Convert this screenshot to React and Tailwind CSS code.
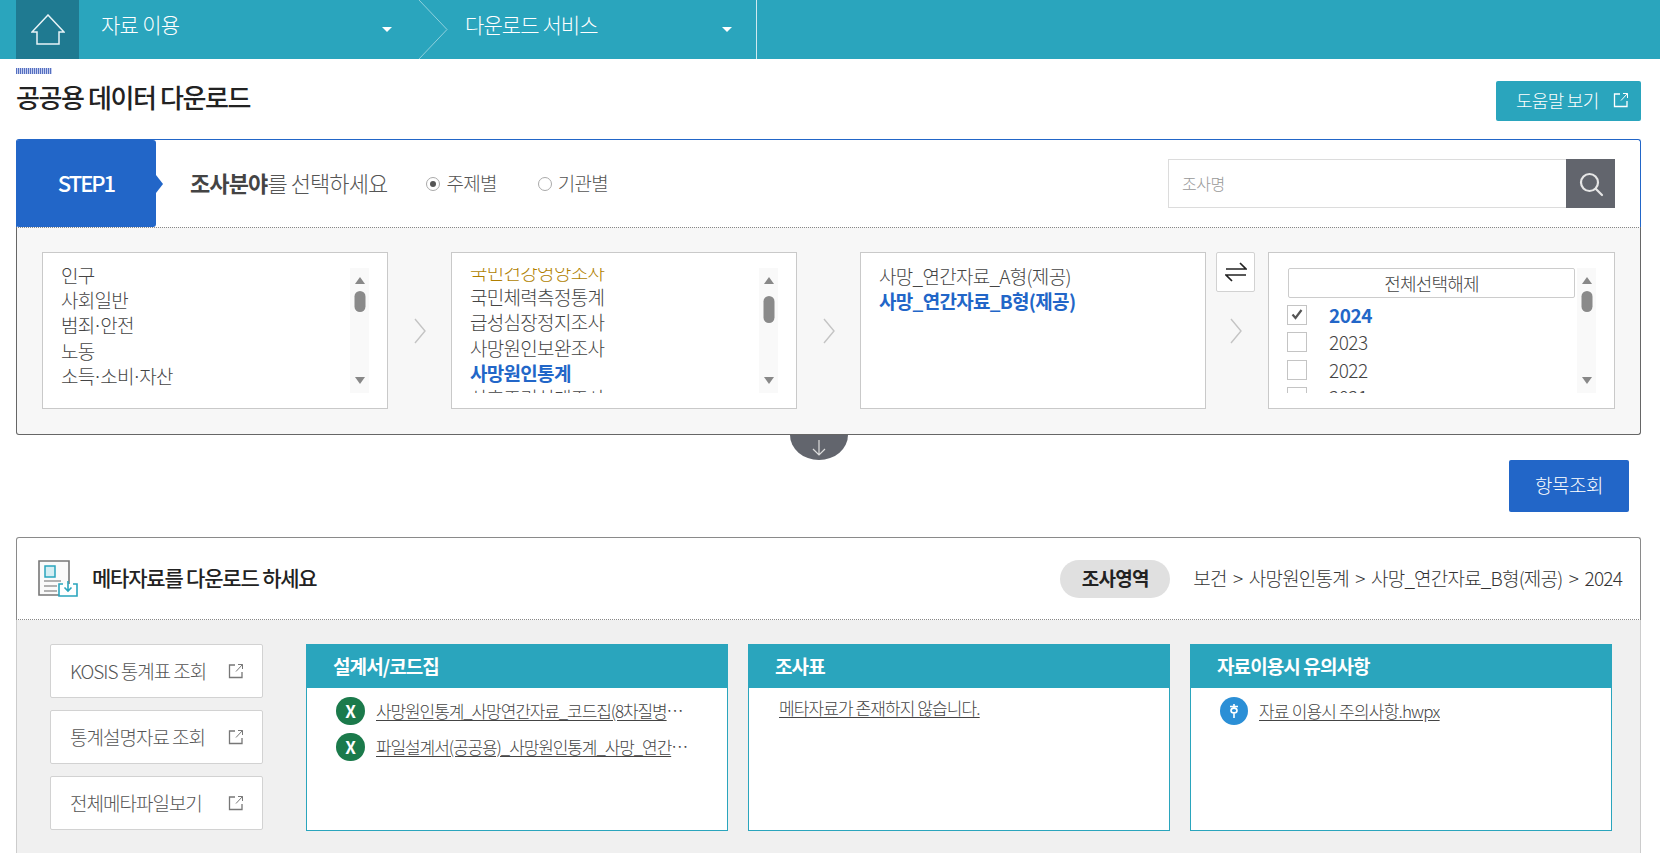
import { useState } from "react";

const BLUE = "text-[#2266c8]";

const ExternalIcon = ({ color = "#777" }) => (
  <svg width="16" height="16" viewBox="0 0 16 16" fill="none" stroke={color} strokeWidth="1.3" className="shrink-0">
    <path d="M7 2H1.5v12.5H14V9" />
    <path d="M8 8.5 14.5 1.5M10 1.5h4.5V6" strokeWidth="1" />
  </svg>
);

const Caret = () => <span className="w-0 h-0 mt-[9px] border-x-[5px] border-x-transparent border-t-[5px] border-t-white" />;

const Chevron = () => (
  <svg width="14" height="26" viewBox="0 0 14 26" fill="none" stroke="#c4c4c4" strokeWidth="1.4" className="shrink-0">
    <path d="M2 1l10 12L2 25" />
  </svg>
);

const Dot = () => <span className="-mx-[2px]">·</span>;

const Scrollbar = ({ thumbTop, thumbHeight }) => (
  <div className="relative w-[19px] h-full bg-[#f9f9f9] shrink-0 flex flex-col items-center justify-between py-[9px]">
    <span className="w-0 h-0 border-x-[5px] border-x-transparent border-b-[7px] border-b-[#888]" />
    <span
      className="absolute left-1/2 -translate-x-1/2 w-[11px] rounded-full bg-[#8a8a8a]"
      style={{ top: thumbTop, height: thumbHeight }}
    />
    <span className="w-0 h-0 border-x-[5px] border-x-transparent border-t-[7px] border-t-[#888]" />
  </div>
);

const ListBox = ({ children, scroll, className = "" }) => (
  <div className={`w-[346px] h-[157px] shrink-0 bg-white border border-[#c9c9c9] pl-[18px] pr-[18px] pt-[15px] ${className}`}>
    <div className="flex h-[125px]">
      <div className="flex-1 min-w-0 overflow-hidden">{children}</div>
      {scroll && <Scrollbar {...scroll} />}
    </div>
  </div>
);

const Row = ({ children, tone = "text-[#444]" }) => (
  <div className={`h-[25.2px] leading-[25px] text-[19px] tracking-[-0.7px] whitespace-nowrap ${tone}`}>{children}</div>
);

const Check = ({ checked }) => (
  <span className="w-[20px] h-[20px] border border-[#c4c4c4] bg-white flex items-center justify-center shrink-0">
    {checked && (
      <svg width="12" height="11" viewBox="0 0 12 11" fill="none" stroke="#555" strokeWidth="2.2">
        <path d="M1.5 5.5l3 3.5 6-8" />
      </svg>
    )}
  </span>
);

const YearRow = ({ year, checked }) => (
  <div className="flex items-center gap-[22px] h-[27.5px]">
    <Check checked={checked} />
    <span className={`text-[19px] tracking-[-0.5px] ${checked ? `font-bold ${BLUE}` : "text-[#444]"}`}>{year}</span>
  </div>
);

const Radio = ({ label, checked }) => (
  <label className="flex items-center gap-[6px] text-[19px] tracking-[-0.7px] text-[#555]">
    <span className="w-[14px] h-[14px] mt-[2px] rounded-full border border-[#aaa] bg-white flex items-center justify-center">
      {checked && <span className="w-[6px] h-[6px] rounded-full bg-[#555]" />}
    </span>
    {label}
  </label>
);

const SideLink = ({ label }) => (
  <a className="h-[54px] bg-white border border-[#d2d2d2] rounded-[2px] flex items-center justify-between pl-[19px] pr-[18px] text-[19px] tracking-[-1px] text-[#555]">
    {label}
    <ExternalIcon />
  </a>
);

const FileIcon = ({ type }) =>
  type === "xls" ? (
    <span className="w-[29px] h-[28px] rounded-full bg-[#1b7a4b] text-white text-[17px] font-bold flex items-center justify-center shrink-0">
      X
    </span>
  ) : (
    <span className="w-[28px] h-[28px] rounded-full bg-[#2b8fd6] flex items-center justify-center shrink-0">
      <svg width="12" height="16" viewBox="0 0 12 16" fill="none" stroke="#fff" strokeWidth="1.6">
        <path d="M2 3.5h8M6 1v2.5M3 7.5a3 2.4 0 1 0 6 0a3 2.4 0 1 0 -6 0M6 10v5" />
      </svg>
    </span>
  );

const FileRow = ({ type, name, tight }) => (
  <div className="flex items-center gap-[11px] h-[36px]">
    <FileIcon type={type} />
    <a className={`min-w-0 truncate underline underline-offset-2 text-[17px] text-[#444] ${tight ? "tracking-[-1.1px]" : "tracking-[-0.8px]"}`}>
      {name}
    </a>
  </div>
);

const Card = ({ title, children }) => (
  <div className="w-[422px] h-[187px] bg-white border border-[#2aa5bd] border-t-0">
    <div className="h-[44px] -mx-px bg-[#2aa5bd] text-white font-bold text-[19px] tracking-[-0.9px] pl-[27px] flex items-center">
      {title}
    </div>
    {children}
  </div>
);

const App = () => {
  const [keyword, setKeyword] = useState("");

  return (
    <div className="h-[853px] overflow-hidden bg-white font-['Noto_Sans_CJK_KR','Noto_Sans',sans-serif] font-light">
      {/* 상단 메뉴 */}
      <nav className="h-[59px] bg-[#2aa5bd] pl-4 flex text-white">
        <div className="w-[63px] bg-[#1f7a91] flex items-center justify-center">
          <svg width="34" height="31" viewBox="0 0 34 31" fill="none" stroke="#e8f4f7" strokeWidth="1.5">
            <path d="M17 1 1 18h5v12h22V18h5z" />
          </svg>
        </div>
        <div className="w-[341px] flex items-center justify-between pl-[22px] pr-[28px] pb-[9px] text-[21px] tracking-[-0.7px]">
          자료 이용
          <Caret />
        </div>
        <svg width="30" height="59" viewBox="0 0 30 59" fill="none" stroke="#8fd0dd" className="shrink-0 -ml-[2px]">
          <path d="M1 0l28 29.5L1 59" />
        </svg>
        <div className="w-[309px] flex items-center justify-between pl-[17px] pr-[24px] pb-[9px] text-[21px] tracking-[-0.9px] border-r border-[#cfe9ef]">
          다운로드 서비스
          <Caret />
        </div>
      </nav>

      <div className="pl-4 pr-[19px]">
        {/* 제목 */}
        <div className="h-[80px] relative flex items-start justify-between">
          <div>
            <div className="w-[36px] h-[6px] mt-[9px] bg-[repeating-linear-gradient(90deg,#5570c0_0_1px,#c6cff0_1px_2px)]" />
            <h1 className="text-[26px] leading-[36px] mt-[5px] font-medium tracking-[-1.4px] text-[#222]">공공용 데이터 다운로드</h1>
          </div>
          <a className="mt-[22px] w-[145px] h-[40px] pb-[2px] bg-[#2aa5bd] rounded-[2px] text-white text-[18px] tracking-[-0.7px] flex items-center justify-between pl-[20px] pr-[12px]">
            도움말 보기
            <ExternalIcon color="#fff" />
          </a>
        </div>

        {/* STEP1 */}
        <div className="h-[88px] flex items-center border border-[#2266c8] border-b-0 rounded-t-[3px] pr-[25px]">
          <div className="relative w-[140px] h-full -ml-px pb-[3px] bg-[#2266c8] rounded-[3px] text-white text-[22px] font-medium tracking-[-2px] flex items-center justify-center">
            STEP1
            <span className="absolute -right-[7px] top-1/2 -translate-y-1/2 w-0 h-0 border-y-[9px] border-y-transparent border-l-[7px] border-l-[#2266c8]" />
          </div>
          <p className="ml-[34px] pb-[2px] text-[22px] tracking-[-0.9px] text-[#555]">
            <strong className="font-bold text-[#444]">조사분야</strong>를 선택하세요
          </p>
          <div className="ml-[39px] pb-[1px] flex gap-[41px]">
            <Radio label="주제별" checked />
            <Radio label="기관별" />
          </div>
          <div className="ml-auto w-[447px] h-[49px] flex">
            <input
              value={keyword}
              onChange={(e) => setKeyword(e.target.value)}
              placeholder="조사명"
              className="flex-1 min-w-0 border border-[#dcdcdc] border-r-0 pl-[13px] pb-[2px] text-[16px] tracking-[-0.5px] placeholder:text-[#999] outline-none"
            />
            <button className="w-[49px] bg-[#62656d] flex items-center justify-center">
              <svg width="26" height="26" viewBox="0 0 26 26" fill="none" stroke="#e6e6e6" strokeWidth="2.2">
                <circle cx="11.5" cy="11.5" r="8.5" />
                <path d="M18 18l6 6" strokeLinecap="round" />
              </svg>
            </button>
          </div>
        </div>

        {/* 선택 목록 */}
        <div className="relative h-[208px] bg-[#f7f7f7] border border-[#666] border-t-[#888] [border-top-style:dotted] rounded-b-[3px] pl-[25px] pt-[24px] flex items-start">
          <ListBox scroll={{ thumbTop: 23, thumbHeight: 21 }}>
            <div className="-mt-[6px]">
              <Row>인구</Row>
              <Row>사회일반</Row>
              <Row>범죄<Dot />안전</Row>
              <Row>노동</Row>
              <Row>소득<Dot />소비<Dot />자산</Row>
            </div>
          </ListBox>
          <div className="w-[63px] h-[157px] shrink-0 flex items-center justify-center">
            <Chevron />
          </div>
          <ListBox scroll={{ thumbTop: 28, thumbHeight: 27 }}>
            <div className="-mt-[9px]">
              <Row tone="text-[#b07f00]">국민건강영양조사</Row>
              <Row>국민체력측정통계</Row>
              <Row>급성심장정지조사</Row>
              <Row>사망원인보완조사</Row>
              <Row tone={`font-bold ${BLUE}`}>사망원인통계</Row>
              <Row>산후조리실태조사</Row>
            </div>
          </ListBox>
          <div className="w-[63px] h-[157px] shrink-0 flex items-center justify-center">
            <Chevron />
          </div>
          <ListBox>
            <div className="-mt-[5px]">
              <Row>사망_연간자료_A형(제공)</Row>
              <Row tone={`font-bold ${BLUE}`}>사망_연간자료_B형(제공)</Row>
            </div>
          </ListBox>
          <div className="ml-[10px] w-[39px] flex flex-col items-center shrink-0">
            <button className="w-[39px] h-[40px] bg-white border border-[#d2d2d2] rounded-[2px] flex items-center justify-center">
              <svg width="22" height="20" viewBox="0 0 22 20" fill="none" stroke="#222" strokeWidth="1.7">
                <path d="M1 7h20L15 1M21 13H1l6 6" />
              </svg>
            </button>
            <div className="h-[77px] flex items-center">
              <Chevron />
            </div>
          </div>
          <ListBox className="ml-[13px] w-[347px]" scroll={{ thumbTop: 23, thumbHeight: 21 }}>
            <button className="block ml-px w-[287px] h-[30px] bg-white border border-[#ccc] rounded-[2px] text-[18px] tracking-[-0.8px] text-[#444] mb-[3px]">
              전체선택해제
            </button>
            <YearRow year="2024" checked />
            <YearRow year="2023" />
            <YearRow year="2022" />
            <YearRow year="2021" />
          </ListBox>

          {/* 접기 버튼 */}
          <button className="absolute left-[773px] -bottom-[26px] w-[58px] h-[25px] bg-[#62656d] rounded-b-[29px_25px] flex items-center justify-center">
            <svg width="14" height="16" viewBox="0 0 14 16" fill="none" stroke="#ddd" strokeWidth="1.2">
              <path d="M7 0v15M1 9l6 6 6-6" />
            </svg>
          </button>
        </div>

        <div className="h-[102px] flex items-start justify-end pr-[12px] pt-[25px]">
          <button className="w-[120px] h-[52px] pb-[2px] bg-[#2266c8] rounded-[2px] text-white text-[19px] tracking-[-0.5px]">
            항목조회
          </button>
        </div>

        {/* 메타자료 */}
        <div className="h-[83px] flex items-center border border-[#8a8a8a] border-b-[#888] [border-bottom-style:dotted] rounded-t-[3px] pl-[21px] pr-[18px]">
          <svg width="40" height="37" viewBox="0 0 40 37" fill="none" className="shrink-0">
            <path d="M1 1h30v34H1z" fill="#fafafa" stroke="#777" strokeWidth="1.6" />
            <rect x="7" y="6" width="10" height="11" fill="#d4eef3" stroke="#2aa5bd" strokeWidth="1.5" />
            <path d="M6 21h17M6 26h13M6 31h13" stroke="#999" strokeWidth="1.6" />
            <path d="M25 24h-4v12h18V24h-4" fill="#fff" stroke="#2aa5bd" strokeWidth="1.6" />
            <path d="M30 21v10M26.5 27.5 30 31l3.5-3.5" stroke="#2aa5bd" strokeWidth="1.6" />
          </svg>
          <h2 className="ml-[14px] pb-[2px] text-[21px] font-medium tracking-[-1.2px] text-[#222]">메타자료를 다운로드 하세요</h2>
          <span className="ml-auto w-[110px] h-[38px] pb-[1px] rounded-full bg-[#e0e0e0] text-[19px] font-bold tracking-[-0.7px] text-[#222] flex items-center justify-center">
            조사영역
          </span>
          <span className="ml-[23px] pb-[1px] text-[19px] tracking-[-0.8px] [word-spacing:3px] text-[#333]">
            보건 &gt; 사망원인통계 &gt; 사망_연간자료_B형(제공) &gt; 2024
          </span>
        </div>

        <div className="h-[234px] bg-[#f0f0f0] border-x border-[#ccc] pl-[33px] pt-[24px] flex items-start">
          <div className="w-[213px] flex flex-col gap-[12px] shrink-0">
            <SideLink label="KOSIS 통계표 조회" />
            <SideLink label="통계설명자료 조회" />
            <SideLink label="전체메타파일보기" />
          </div>
          <div className="ml-[43px] flex gap-5">
            <Card title="설계서/코드집">
              <div className="pl-[29px] pr-[29px] pt-[5px]">
                <FileRow tight type="xls" name="사망원인통계_사망연간자료_코드집(8차질병분류)_20240101.xlsx" />
                <FileRow tight type="xls" name="파일설계서(공공용)_사망원인통계_사망_연간자료_B형(제공)_2024.xlsx" />
              </div>
            </Card>
            <Card title="조사표">
              <a className="block ml-[30px] mt-[7px] underline underline-offset-2 text-[17px] tracking-[-0.9px] text-[#444]">
                메타자료가 존재하지 않습니다.
              </a>
            </Card>
            <Card title="자료이용시 유의사항">
              <div className="px-[29px] pt-[5px]">
                <FileRow type="hwp" name="자료 이용시 주의사항.hwpx" />
              </div>
            </Card>
          </div>
        </div>
      </div>
    </div>
  );
};

export default App;
